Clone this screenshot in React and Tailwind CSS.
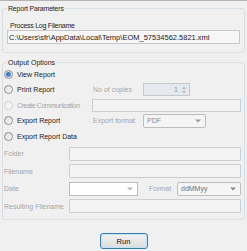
import React from "react";

const Radio = ({ label, checked, disabled, textClass = "" }) => (
  <label className="flex items-center gap-[4px]">
    <span
      className={`w-[9px] h-[9px] rounded-full border flex items-center justify-center ${
        disabled
          ? "border-[#d0d0d0] bg-[#f4f4f4]"
          : "border-[#8e8f8f] bg-gradient-to-br from-[#dcdcdc] to-[#fbfbfb]"
      }`}
    >
      {checked && <span className="w-[5px] h-[5px] rounded-full bg-gradient-to-br from-[#1f5ea8] to-[#5fa3e6]" />}
    </span>
    <span className={`${disabled ? "text-[#a6a6a6]" : ""} ${textClass}`}>{label}</span>
  </label>
);

const Arrow = ({ color = "#8a8a8a" }) => (
  <svg width="6" height="4" viewBox="0 0 6 4">
    <path d="M0 0.5h6L3 3.5z" fill={color} />
  </svg>
);

const Field = ({ className = "" }) => (
  <div className={`h-[14px] border border-[#c9ced3] bg-[#f3f3f3] rounded-[1px] ${className}`} />
);

export default function App() {
  return (
    <div className="w-[247px] h-[251px] bg-[#f0f0f0] border-t border-[#b4b4b4] px-[2px] pt-[2.5px] flex flex-col text-[7px] leading-[9px] text-[#1c1c1c] font-['Liberation_Sans',Arial,sans-serif]">
      {/* Report Parameters */}
      <fieldset className="border border-[#d5dfe5] rounded-[3px] pl-[4px] pr-[4px] pb-[8px]">
        <legend className="px-[1px] tracking-[-0.2px]">Report Parameters</legend>
        <div className="pt-[8px] pl-[3px] tracking-[-0.25px]">Process Log Filename</div>
        <div className="mt-[0.5px] h-[14px] border border-[#c6c9cc] bg-[#f6f6f6] flex items-center px-[1px] text-[7.5px] text-[#222]">
          C:\Users\sfr\AppData\Local\Temp\EOM_57534562.5821.xml
        </div>
      </fieldset>

      {/* Output Options */}
      <fieldset className="mt-[4.5px] border border-[#d5dfe5] rounded-[3px] pl-[1px] pr-[3px] pb-[4px]">
        <legend className="ml-[3px] px-[1px]">Output Options</legend>

        <div className="h-[15.5px] flex items-center">
          <Radio label="View Report" checked />
        </div>

        <div className="h-[15.5px] flex items-center">
          <div className="w-[88px]">
            <Radio label="Print Report" />
          </div>
          <span className="w-[51px] pl-[1px] text-[#a6a6a6]">No of copies</span>
          <div className="w-[47px] h-[13px] border border-[#c3c9cf] bg-[#e5e8ec] flex items-center justify-end text-[#9a9a9a]">
            <span className="mr-[3px]">1</span>
            <svg width="6" height="10" viewBox="0 0 6 10" className="mr-[2px]">
              <path d="M1 4L3 1.5L5 4z" fill="#b3b8bd" />
              <path d="M1 6L3 8.5L5 6z" fill="#b3b8bd" />
            </svg>
          </div>
        </div>

        <div className="h-[15.5px] flex items-center">
          <div className="w-[88px]">
            <Radio label="Create Communication" disabled textClass="tracking-[-0.45px]" />
          </div>
          <div className="flex-1 h-[13px] border border-[#c9ced3] bg-[#f3f3f3]" />
        </div>

        <div className="h-[15.5px] flex items-center">
          <div className="w-[88px]">
            <Radio label="Export Report" />
          </div>
          <span className="w-[51px] pl-[1px] text-[#a6a6a6]">Export format</span>
          <div className="w-[63px] h-[14px] border border-[#bcbcbc] rounded-[2px] bg-[#f5f5f5] flex items-center justify-between pl-[3px] pr-[4px] text-[#8c8c8c]">
            <span>PDF</span>
            <Arrow color="#9a9a9a" />
          </div>
        </div>

        <div className="h-[15.5px] flex items-center">
          <Radio label="Export Report Data" />
        </div>

        <div className="pt-[1px] text-[#a6a6a6]">
          <div className="h-[17.5px] flex items-center">
            <span className="w-[65px]">Folder</span>
            <Field className="flex-1" />
          </div>
          <div className="h-[17.5px] flex items-center">
            <span className="w-[65px]">Filename</span>
            <Field className="flex-1" />
          </div>
          <div className="h-[17.5px] flex items-center">
            <span className="w-[65px]">Date</span>
            <div className="w-[69px] h-[14px] border border-[#b9bcc0] bg-white flex items-center justify-end pr-[4px]">
              <Arrow color="#b5b5b5" />
            </div>
            <span className="ml-[11px] w-[28px]">Format</span>
            <div className="flex-1 h-[14px] border border-[#bcbcbc] rounded-[2px] bg-[#f5f5f5] flex items-center justify-between pl-[3px] pr-[4px] text-[#6f6f6f]">
              <span>ddMMyy</span>
              <Arrow color="#8a8a8a" />
            </div>
          </div>
          <div className="h-[17.5px] flex items-center">
            <span className="w-[65px]">Resulting Filename</span>
            <Field className="flex-1" />
          </div>
        </div>
      </fieldset>

      <div className="mt-[13px] flex justify-center">
        <button className="w-[48px] h-[16px] rounded-[3px] border border-[#3c7fb1] bg-gradient-to-b from-[#f3f3f3] to-[#dcdcdc] shadow-[inset_0_0_0_1px_#bfe3f7] text-[7.5px] leading-[9px] text-[#111]">
          Run
        </button>
      </div>
    </div>
  );
}
